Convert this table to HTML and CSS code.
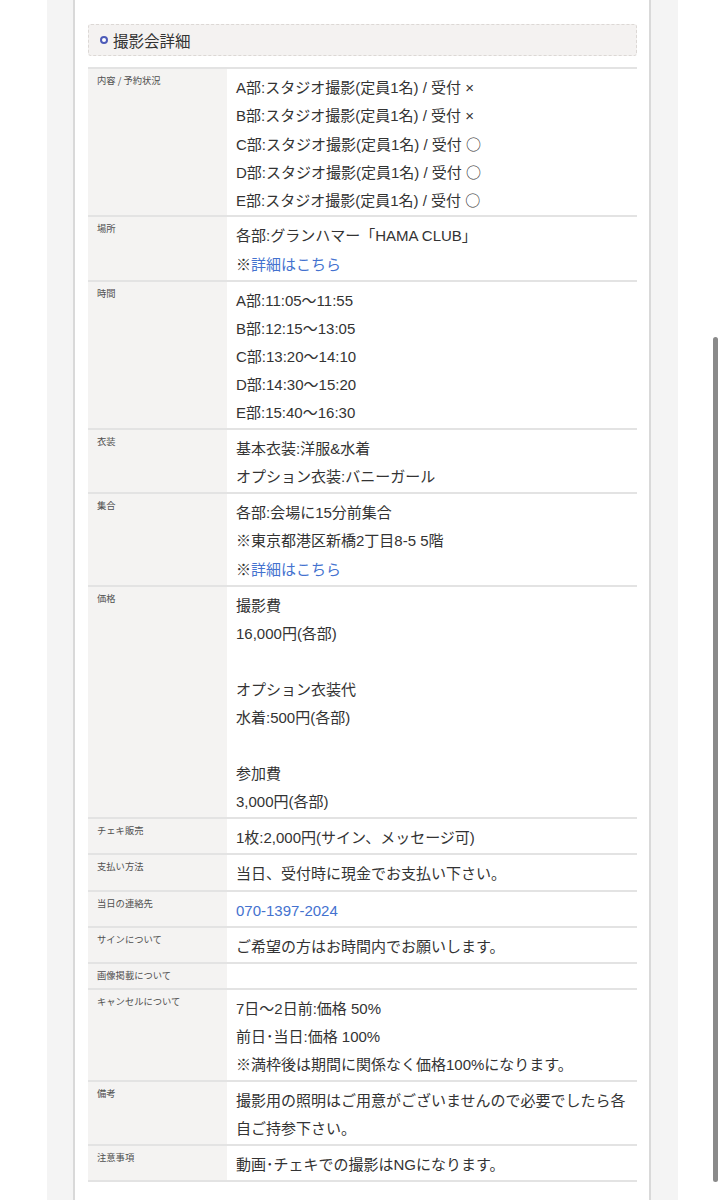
FILE: index.html
```html
<!DOCTYPE html>
<html lang="ja">
<head>
<meta charset="utf-8">
<link rel="stylesheet" href="styles.css">
<title>撮影会詳細</title>
</head>
<body>
<div class="frame">
  <div class="card">
    <h2 class="section-title"><span class="dot"></span>撮影会詳細</h2>
    <table class="detail">
      <tr>
        <th>内容 / 予約状況</th>
        <td>
          <div class="ln">A部:スタジオ撮影(定員1名) / 受付 ×</div>
          <div class="ln">B部:スタジオ撮影(定員1名) / 受付 ×</div>
          <div class="ln">C部:スタジオ撮影(定員1名) / 受付 <span class="mark">○</span></div>
          <div class="ln">D部:スタジオ撮影(定員1名) / 受付 <span class="mark">○</span></div>
          <div class="ln">E部:スタジオ撮影(定員1名) / 受付 <span class="mark">○</span></div>
        </td>
      </tr>
      <tr>
        <th>場所</th>
        <td>
          <div class="ln">各部:グランハマー「HAMA CLUB」</div>
          <div class="ln">※<a href="#">詳細はこちら</a></div>
        </td>
      </tr>
      <tr>
        <th>時間</th>
        <td>
          <div class="ln">A部:11:05〜11:55</div>
          <div class="ln">B部:12:15〜13:05</div>
          <div class="ln">C部:13:20〜14:10</div>
          <div class="ln">D部:14:30〜15:20</div>
          <div class="ln">E部:15:40〜16:30</div>
        </td>
      </tr>
      <tr>
        <th>衣装</th>
        <td>
          <div class="ln">基本衣装:洋服&amp;水着</div>
          <div class="ln">オプション衣装:バニーガール</div>
        </td>
      </tr>
      <tr>
        <th>集合</th>
        <td>
          <div class="ln">各部:会場に15分前集合</div>
          <div class="ln">※東京都港区新橋2丁目8-5 5階</div>
          <div class="ln">※<a href="#">詳細はこちら</a></div>
        </td>
      </tr>
      <tr>
        <th>価格</th>
        <td>
          <div class="ln">撮影費</div>
          <div class="ln">16,000円(各部)</div>
          <div class="ln"></div>
          <div class="ln">オプション衣装代</div>
          <div class="ln">水着:500円(各部)</div>
          <div class="ln"></div>
          <div class="ln">参加費</div>
          <div class="ln">3,000円(各部)</div>
        </td>
      </tr>
      <tr>
        <th>チェキ販売</th>
        <td><div class="ln">1枚:2,000円(サイン、メッセージ可)</div></td>
      </tr>
      <tr>
        <th>支払い方法</th>
        <td><div class="ln">当日、受付時に現金でお支払い下さい。</div></td>
      </tr>
      <tr>
        <th>当日の連絡先</th>
        <td><div class="ln"><a href="#">070-1397-2024</a></div></td>
      </tr>
      <tr>
        <th>サインについて</th>
        <td><div class="ln">ご希望の方はお時間内でお願いします。</div></td>
      </tr>
      <tr class="empty">
        <th>画像掲載について</th>
        <td></td>
      </tr>
      <tr>
        <th>キャンセルについて</th>
        <td>
          <div class="ln">7日〜2日前:価格 50%</div>
          <div class="ln">前日･当日:価格 100%</div>
          <div class="ln">※満枠後は期間に関係なく価格100%になります。</div>
        </td>
      </tr>
      <tr>
        <th>備考</th>
        <td>
          <div class="ln">撮影用の照明はご用意がございませんので必要でしたら各</div>
          <div class="ln">自ご持参下さい。</div>
        </td>
      </tr>
      <tr>
        <th>注意事項</th>
        <td><div class="ln">動画･チェキでの撮影はNGになります。</div></td>
      </tr>
    </table>
  </div>
</div>
<div class="scrollbar"></div>
</body>
</html>
```

FILE: styles.css
```css
html, body {
  margin: 0;
  padding: 0;
  background: #ffffff;
}
body {
  font-family: "Liberation Sans", "Noto Sans CJK JP", sans-serif;
  color: #333333;
  width: 725px;
  height: 1200px;
  overflow: hidden;
}
.frame {
  margin-left: 47px;
  width: 631px;
  box-sizing: border-box;
  padding: 0 27px 0 26px;
  background: #f4f4f4;
  min-height: 1200px;
}
.card {
  background: #ffffff;
  border-left: 2px solid #d9d9d9;
  border-right: 2px solid #d9d9d9;
  min-height: 1200px;
  padding: 24px 12px 0 13px;
  box-sizing: border-box;
}
.section-title {
  margin: 0 0 11px;
  height: 32px;
  box-sizing: border-box;
  border: 1px dashed #dcd8d5;
  border-radius: 3px;
  background: #f4f2f1;
  display: flex;
  align-items: center;
  padding-left: 11px;
  font-family: "Noto Sans CJK JP", sans-serif;
  font-size: 15.5px;
  font-weight: normal;
  color: #333333;
}
.dot {
  width: 4px;
  height: 4px;
  border: 2px solid #4d5bb8;
  border-radius: 50%;
  margin-right: 5px;
  background: #fff;
}
.detail {
  width: 100%;
  border-collapse: collapse;
  border-bottom: 2px solid #e3e3e3;
}
.detail tr {
  border-top: 2px solid #e3e3e3;
}
.detail th {
  width: 139px;
  box-sizing: border-box;
  background: #f4f3f2;
  font-family: "Noto Sans CJK JP", sans-serif;
  font-size: 9.3px;
  line-height: 13px;
  font-weight: normal;
  color: #505050;
  text-align: left;
  vertical-align: top;
  padding: 5px 9px 6px;
}
.detail td {
  font-size: 15px;
  color: #333333;
  padding: 5px 9px 1px;
  vertical-align: top;
}
.ln {
  height: 28.1px;
  line-height: 28px;
  white-space: nowrap;
}
.detail a {
  color: #4472cf;
  text-decoration: none;
}
.mark {
  font-family: "Noto Sans CJK JP", sans-serif;
}
.scrollbar {
  position: fixed;
  left: 713px;
  top: 337px;
  width: 5px;
  height: 845px;
  border-radius: 3px;
  background: #8a8a8a;
}
```
